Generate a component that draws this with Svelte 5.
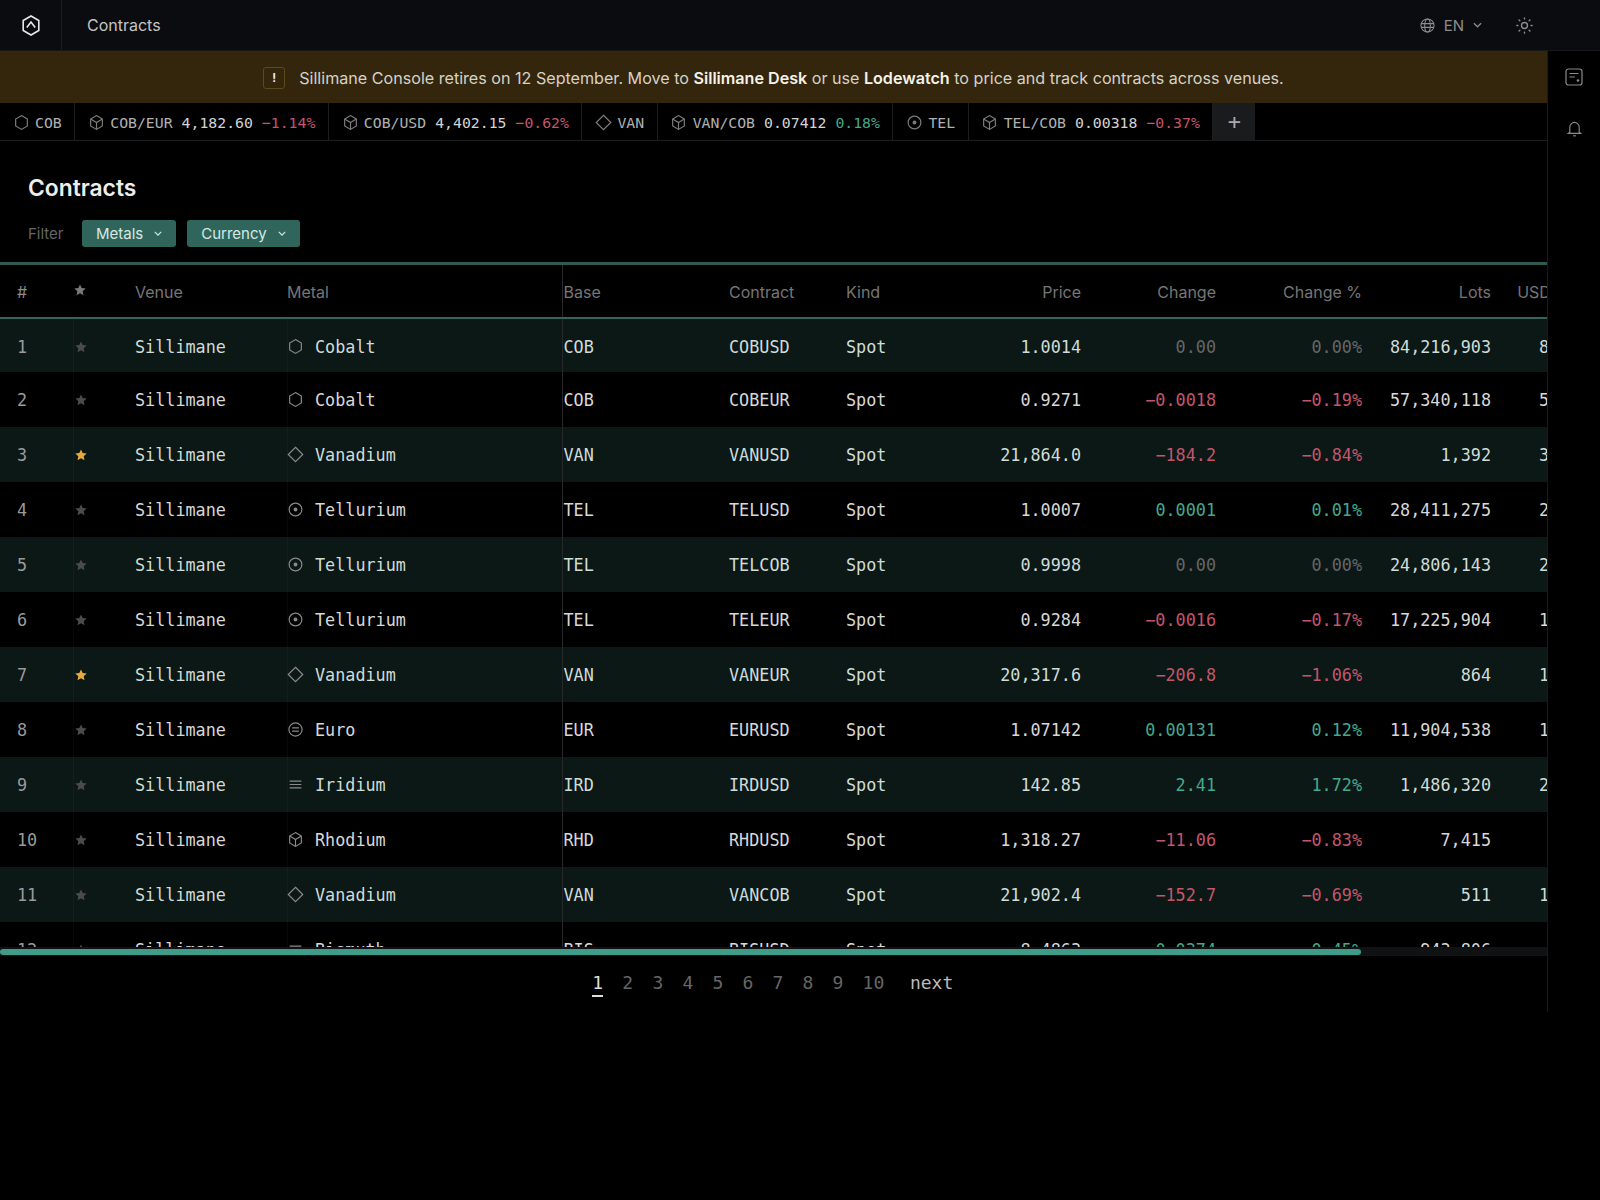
<script lang="ts">
	const tickers = [
		{ icon: 'hex', pair: 'COB' },
		{ icon: 'cube', pair: 'COB/EUR', price: '4,182.60', change: '−1.14%', dir: 'down' },
		{ icon: 'cube', pair: 'COB/USD', price: '4,402.15', change: '−0.62%', dir: 'down' },
		{ icon: 'diamond', pair: 'VAN' },
		{ icon: 'cube', pair: 'VAN/COB', price: '0.07412', change: '0.18%', dir: 'up' },
		{ icon: 'target', pair: 'TEL' },
		{ icon: 'cube', pair: 'TEL/COB', price: '0.00318', change: '−0.37%', dir: 'down' }
	];

	// icon, metal, base, contract, price, change, change %, lots, usd
	const rows = [
		['hex', 'Cobalt', 'COB', 'COBUSD', '1.0014', '0.00', '0.00%', '84,216,903', '84,334,806', 'flat'],
		['hex', 'Cobalt', 'COB', 'COBEUR', '0.9271', '−0.0018', '−0.19%', '57,340,118', '53,160,023', 'down'],
		['diamond', 'Vanadium', 'VAN', 'VANUSD', '21,864.0', '−184.2', '−0.84%', '1,392', '30,434,688', 'down', true],
		['target', 'Tellurium', 'TEL', 'TELUSD', '1.0007', '0.0001', '0.01%', '28,411,275', '28,431,163', 'up'],
		['target', 'Tellurium', 'TEL', 'TELCOB', '0.9998', '0.00', '0.00%', '24,806,143', '24,801,182', 'flat'],
		['target', 'Tellurium', 'TEL', 'TELEUR', '0.9284', '−0.0016', '−0.17%', '17,225,904', '15,992,530', 'down'],
		['diamond', 'Vanadium', 'VAN', 'VANEUR', '20,317.6', '−206.8', '−1.06%', '864', '17,554,406', 'down', true],
		['euro', 'Euro', 'EUR', 'EURUSD', '1.07142', '0.00131', '0.12%', '11,904,538', '12,754,760', 'up'],
		['bars', 'Iridium', 'IRD', 'IRDUSD', '142.85', '2.41', '1.72%', '1,486,320', '21,232,081', 'up'],
		['cube', 'Rhodium', 'RHD', 'RHDUSD', '1,318.27', '−11.06', '−0.83%', '7,415', '9,775,000', 'down'],
		['diamond', 'Vanadium', 'VAN', 'VANCOB', '21,902.4', '−152.7', '−0.69%', '511', '11,192,126', 'down'],
		['bars', 'Bismuth', 'BIS', 'BISUSD', '8.4863', '0.0374', '0.45%', '943,806', '8,009,417', 'up']
	];

	const pages = [1, 2, 3, 4, 5, 6, 7, 8, 9, 10];
</script>

{#snippet metalIcon(name)}
	<svg class="icon" viewBox="0 0 16 16" fill="none" stroke="currentColor" stroke-width="1.1">
		{#if name === 'hex'}
			<path d="M8 1.5l5.5 3.2v6.6L8 14.5l-5.5-3.2V4.7z" />
		{:else if name === 'cube'}
			<path d="M8 1.5l5.5 3.2v6.6L8 14.5l-5.5-3.2V4.7z" />
			<path d="M2.5 4.7L8 8l5.5-3.3M8 8v6.5" />
		{:else if name === 'diamond'}
			<path d="M8 1.2L14.8 8 8 14.8 1.2 8z" />
		{:else if name === 'target'}
			<circle cx="8" cy="8" r="6" />
			<circle cx="8" cy="8" r="1.8" fill="currentColor" stroke="none" />
		{:else if name === 'euro'}
			<circle cx="8" cy="8" r="6.2" />
			<path d="M4.8 6.5h6.4M4.8 9.5h6.4" />
		{:else}
			<path d="M2.5 4.8h11M2.5 8h11M2.5 11.2h11" />
		{/if}
	</svg>
{/snippet}

{#snippet star()}
	<svg class="star" viewBox="0 0 12 12" fill="currentColor">
		<path d="M6 .4l1.7 3.7 4 .5-3 2.7.8 4L6 9.3l-3.5 2 .8-4-3-2.7 4-.5z" />
	</svg>
{/snippet}

<div class="page">
	<header class="topbar">
		<div class="logo">
			<svg viewBox="0 0 18 21" width="18" height="21" fill="none" stroke="#e8e8e8" stroke-width="1.6">
				<path d="M9 1l7.8 4.5v10L9 20 1.2 15.500v-10z" />
				<path d="M4.800 12.500L9 7l4.200 5.500" />
			</svg>
		</div>
		<span class="page-name">Contracts</span>
		<div class="top-actions">
			<div class="lang">
				<svg viewBox="0 0 16 16" width="15" height="15" fill="none" stroke="currentColor" stroke-width="1.1">
					<circle cx="8" cy="8" r="7" />
					<ellipse cx="8" cy="8" rx="3" ry="7" />
					<path d="M1 6h14M1 10h14" />
				</svg>
				<span>EN</span>
				<svg class="chev" viewBox="0 0 10 6" width="9" height="6" fill="none" stroke="currentColor" stroke-width="1.4">
					<path d="M1 1l4 4 4-4" />
				</svg>
			</div>
			<svg class="sun" viewBox="0 0 16 16" width="17" height="17" fill="none" stroke="currentColor" stroke-width="1.3">
				<circle cx="8" cy="8" r="2.8" />
				<path stroke-linecap="round" d="M8 .8v1M8 14.200v1M.8 8h1M14.200 8h1M2.900 2.900l.7.7M12.400 12.400l.7.7M2.900 13.100l.7-.7M12.400 3.600l.7-.7" />
			</svg>
		</div>
	</header>

	<div class="body">
		<main class="main">
			<div class="banner">
				<span class="bang">!</span>
				<p>
					Sillimane Console retires on 12 September. Move to <b>Sillimane Desk</b> or use
					<b>Lodewatch</b> to price and track contracts across venues.
				</p>
			</div>

			<div class="ticker">
				{#each tickers as t}
					<div class="tick">
						{@render metalIcon(t.icon)}
						<span class="pair">{t.pair}</span>
						{#if t.price}
							<span class="tick-price">{t.price}</span>
							<span class={t.dir}>{t.change}</span>
						{/if}
					</div>
				{/each}
				<div class="add">+</div>
			</div>

			<section class="heading">
				<h1>Contracts</h1>
				<div class="filters">
					<span class="filter-label">Filter</span>
					<button class="pill">
						Metals
						<svg viewBox="0 0 10 6" width="8" height="5" fill="none" stroke="currentColor" stroke-width="1.5"><path d="M1 1l4 4 4-4" /></svg>
					</button>
					<button class="pill">
						Currency
						<svg viewBox="0 0 10 6" width="8" height="5" fill="none" stroke="currentColor" stroke-width="1.5"><path d="M1 1l4 4 4-4" /></svg>
					</button>
				</div>
			</section>

			<div class="table-wrap">
				<table>
					<colgroup>
						<col style="width: 73px" />
						<col style="width: 62px" />
						<col style="width: 152px" />
						<col style="width: 275px" />
						<col style="width: 167px" />
						<col style="width: 117px" />
						<col style="width: 114px" />
						<col style="width: 121px" />
						<col style="width: 135px" />
						<col style="width: 146px" />
						<col style="width: 129px" />
						<col style="width: 149px" />
					</colgroup>
					<thead>
						<tr>
							<th class="idx">#</th>
							<th class="fav">{@render star()}</th>
							<th>Venue</th>
							<th class="metal-head">Metal</th>
							<th class="base">Base</th>
							<th>Contract</th>
							<th>Kind</th>
							<th class="num">Price</th>
							<th class="num">Change</th>
							<th class="num">Change %</th>
							<th class="num">Lots</th>
							<th class="num usd">USD Turnover</th>
						</tr>
					</thead>
					<tbody>
						{#each rows as r, i}
							<tr>
								<td class="idx">{i + 1}</td>
								<td class="fav" class:gold={r[10]}>{@render star()}</td>
								<td>Sillimane</td>
								<td class="metal">
									<span class="metal-cell">{@render metalIcon(r[0])}{r[1]}</span>
								</td>
								<td class="base">{r[2]}</td>
								<td>{r[3]}</td>
								<td>Spot</td>
								<td class="num">{r[4]}</td>
								<td class="num {r[9]}">{r[5]}</td>
								<td class="num {r[9]}">{r[6]}</td>
								<td class="num">{r[7]}</td>
								<td class="num">{r[8]}</td>
							</tr>
						{/each}
					</tbody>
				</table>
			</div>

			<div class="scroll-track"><div class="scroll-thumb"></div></div>

			<nav class="pager">
				{#each pages as p}
					<span class="page-link" class:current={p === 1}><span>{p}</span></span>
				{/each}
				<span class="page-next">next</span>
			</nav>
		</main>

		<aside class="side">
			<svg viewBox="0 0 18 18" width="18" height="18" fill="none" stroke="currentColor" stroke-width="1.2">
				<rect x="1" y="1" width="16" height="16" rx="2.500" />
				<path d="M4.500 5.500h9M4.500 9h5.500" />
				<circle cx="13" cy="12.500" r="1.300" fill="currentColor" stroke="none" />
			</svg>
			<svg viewBox="0 0 16 18" width="15" height="17" fill="none" stroke="currentColor" stroke-width="1.2">
				<path d="M3 13V7.500a5 5 0 0 1 10 0V13l1.500 1.200h-13z" />
				<path d="M6.500 16.800h3" />
			</svg>
		</aside>
	</div>
</div>

<style>
	:global(body) {
		background: #000;
		font-family: Inter, 'Liberation Sans', sans-serif;
	}

	.page {
		min-height: 1200px;
		background: #000;
	}

	.topbar {
		display: flex;
		align-items: center;
		height: 51px;
		background: #0b0c0f;
		box-sizing: border-box;
		border-bottom: 1px solid #17181a;
	}

	.logo {
		display: flex;
		align-items: center;
		justify-content: center;
		width: 61px;
		height: 100%;
		border-right: 1px solid #1c1d20;
	}

	.page-name {
		margin-left: 25px;
		font-size: 16px;
		color: #c4c4c4;
	}

	.top-actions {
		display: flex;
		align-items: center;
		gap: 34px;
		margin-left: auto;
		padding-right: 67px;
		color: #8c8c8c;
	}

	.lang {
		display: flex;
		align-items: center;
		font-size: 15px;
	}

	.lang span {
		margin: 0 9px;
	}

	.body {
		display: flex;
	}

	.main {
		width: 1547px;
		height: 961px;
		display: flex;
		flex-direction: column;
		overflow: hidden;
	}

	.banner {
		display: flex;
		align-items: center;
		justify-content: center;
		gap: 14px;
		height: 52px;
		flex: none;
		box-sizing: border-box;
		padding-top: 1px;
		background: #33260d;
		font-size: 16.13px;
		color: #d6d2c6;
	}

	.banner p {
		margin: 0;
	}

	.banner b {
		font-weight: 600;
		color: #f5f1e6;
	}

	.bang {
		display: flex;
		align-items: center;
		justify-content: center;
		width: 20px;
		height: 20px;
		border: 1px solid #5c4a1e;
		border-radius: 3px;
		font-family: 'DejaVu Sans Mono', monospace;
		font-size: 13px;
		font-weight: 700;
		color: #eee;
	}

	.ticker {
		display: flex;
		flex: none;
		height: 38px;
		box-sizing: border-box;
		border-bottom: 1px solid #1c1d1f;
		font-family: 'DejaVu Sans Mono', monospace;
		font-size: 14.8px;
	}

	.tick {
		display: flex;
		align-items: center;
		padding: 1px 12.500px 0 14px;
		border-right: 1px solid #1c1d1f;
		white-space: pre;
		color: #b0b0b0;
	}

	.tick .icon {
		width: 17px;
		height: 17px;
		margin: 0 5.300px 0 -1.300px;
		color: #7d7d7d;
	}

	.tick-price {
		margin: 0 9px;
		color: #d4d4d4;
	}

	.add {
		display: flex;
		align-items: center;
		justify-content: center;
		width: 42px;
		background: #1a1b1d;
		color: #aaa;
		font-size: 22px;
	}

	.up {
		color: #44a98c;
	}

	.down {
		color: #c4566b;
	}

	.flat {
		color: #666;
	}

	.heading {
		flex: none;
		padding: 32px 28px 15px;
	}

	h1 {
		margin: 0;
		font-size: 22.8px;
		line-height: 30px;
		font-weight: 600;
		color: #ededed;
	}

	.filters {
		display: flex;
		align-items: center;
		margin-top: 17px;
	}

	.filter-label {
		width: 54px;
		font-size: 15px;
		color: #666;
	}

	.pill {
		display: flex;
		align-items: center;
		gap: 11px;
		height: 27px;
		margin-right: 11px;
		padding: 0 14px;
		border: 0;
		border-radius: 3px;
		background: #2f655b;
		font-family: inherit;
		font-size: 15px;
		color: #d6e8e2;
	}

	.table-wrap {
		flex: none;
		height: 682px;
		overflow: hidden;
		border-top: 3px solid #2f5a50;
	}

	table {
		table-layout: fixed;
		width: 1640px;
		border-collapse: collapse;
		font-family: 'DejaVu Sans Mono', monospace;
		font-size: 16.8px;
		color: #d8d8d8;
	}

	th {
		height: 53px;
		padding: 2px 0 0;
		box-sizing: border-box;
		border-bottom: 2px solid #35645a;
		font-family: Inter, 'Liberation Sans', sans-serif;
		font-size: 16px;
		font-weight: 400;
		text-align: left;
		color: #767676;
		white-space: nowrap;
	}

	td {
		height: 55px;
		padding: 0;
		white-space: nowrap;
	}

	tbody tr:first-child td {
		height: 54px;
		padding-top: 2px;
		box-sizing: border-box;
	}

	tbody tr:nth-child(odd) {
		background: #0b1816;
		color: #cfdcd8;
	}

	.idx {
		padding-left: 17px;
		color: #9a9a9a;
	}

	th.idx {
		color: #8a8a8a;
	}

	.fav {
		padding-left: 1px;
		color: #4b4b4b;
		border-left: 1px solid rgba(255, 255, 255, 0.03);
	}

	th.fav {
		padding-left: 1px;
		color: #777;
		border-left: 0;
		padding-bottom: 4px;
	}

	.gold {
		color: #e8a93c;
	}

	.star {
		display: block;
		width: 12px;
		height: 12px;
	}

	.metal {
		border-left: 1px solid rgba(255, 255, 255, 0.03);
	}

	.metal-cell {
		display: flex;
		align-items: center;
	}

	.metal .icon {
		width: 17px;
		height: 17px;
		margin: 0 11.500px 0 -1px;
		color: #8a8a8a;
	}

	.base {
		padding-left: 1px;
		border-left: 1px solid #26282a;
	}

	th.base {
		padding-left: 1px;
	}

	.num {
		text-align: right;
	}

	th.num {
		text-align: right;
	}

	th.usd {
		padding-right: 17px;
	}

	.scroll-track {
		flex: none;
		height: 9px;
		background: #111213;
		display: flex;
		align-items: flex-end;
		padding-bottom: 1px;
		box-sizing: border-box;
	}

	.scroll-thumb {
		width: 88%;
		height: 6px;
		border-radius: 3px;
		background: #3f9c88;
	}

	.pager {
		display: flex;
		justify-content: center;
		align-items: center;
		height: 56px;
		box-sizing: border-box;
		padding: 0 11px 4px 0;
		font-family: 'DejaVu Sans Mono', monospace;
		font-size: 18px;
	}

	.page-link {
		padding: 0 9.600px;
		color: #666;
	}

	.page-link span {
		display: block;
		line-height: 24px;
		padding-top: 3px;
		border-bottom: 2px solid transparent;
	}

	.page-link.current {
		color: #ddd;
	}

	.page-link.current span {
		border-bottom-color: #ddd;
	}

	.page-next {
		margin-left: 16px;
		color: #bcbcbc;
	}

	.side {
		flex: 1;
		height: 961px;
		box-sizing: border-box;
		border-left: 1px solid #1a1a1c;
		display: flex;
		flex-direction: column;
		align-items: center;
		gap: 34px;
		padding-top: 17px;
		color: #8a8a8a;
	}
</style>
